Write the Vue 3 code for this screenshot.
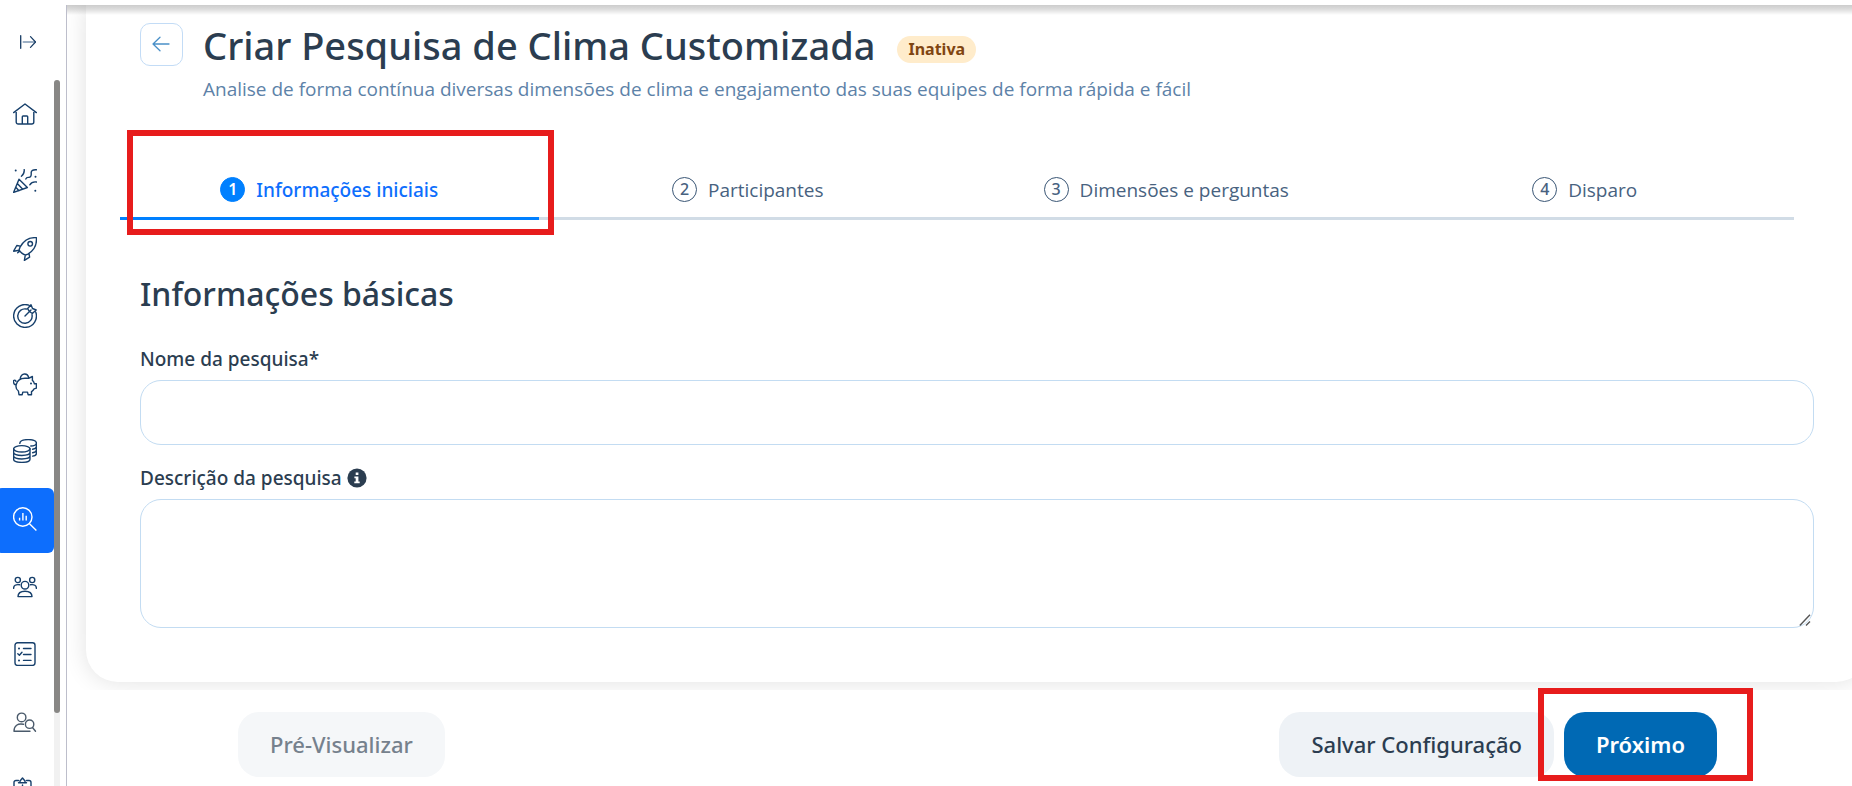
<script setup>
import { ref } from 'vue'

const menu = [
  { label: 'Início', icon: '<path d="M.6 10.6 12 2l11.4 8.6M3.2 8.8V20a2 2 0 0 0 2 2h13.6a2 2 0 0 0 2-2V8.8M9.3 22v-7.2a.8.8 0 0 1 .8-.8h3.8a.8.8 0 0 1 .8.8V22"/>' },
  { label: 'Celebrações', icon: '<path d="M6 10.2.6 23.4l13.8-4.9zM4.3 14.6l5.2 5.5M2.8 18.3l3.2 3.4M11.2.6c.3 2.8-.6 5-2.8 6.6M23.4.8c-3.5-.2-5.400.5-5.200 3.200.3 3-.8 4.600-2.600 4.400-1.500-.2-2.300.4-2.800 1.600M16.800 15.800c1.400-2.200 3.600-3.200 6.600-2.800"/><path d="M2.700 1.500h.01M22.500 7.800h.01M22.300 21.800h.01" stroke-width="2"/>' },
  { label: 'Desenvolvimento', icon: '<path d="M23.400.7c.6 7-2.200 12.700-8.500 16.500l-2.300.8c-2 0-5.900-3.200-6.500-5.300l.9-2.500C10.200 4.300 15.800.2 23.400.7zM7.400 9.100 3.800 8.500.6 14.200l5.500-1M16 16.400l.6 3.800-5.200 3.200.9-5.500M6.300 14.400l-1.600 1.400"/><circle cx="17.200" cy="6.800" r="2.300"/>' },
  { label: 'Metas', icon: '<path d="M15.800 1.200A11.400 11.400 0 1 0 22.800 8.200M13.300 5A7.200 7.200 0 1 0 19 10.600M12 12l6-6M16.500 7.500l-2-2.800L18 .8l1.500 3.700M16.500 7.500l2.800 2 3.900-3.500-3.700-1.500"/>' },
  { label: 'Benefícios', icon: '<path d="M.6 8.600c-.3 3.500 1 4.200 2.600 3.900 1.200-4.600 4.600-6.200 8.800-6.200h3.600l3.800-1.800v3.900c1.400 1 1.700 2.300 2 3.400h2v4.300l-2.300.7c-.7 1.700-1.700 2.300-2.600 2.900v3h-3.400l-.6-2.600H9.800l-.6 2.600H6l-.6-3.700c-2.200-1.500-2.800-3.800-2.200-6.500M.6 8.600c1.300-.9 2.300-.2 2.200.7M7.200 6.500C8.400.5 14.600.8 15.600 5.200"/><path d="M18 11.400h.01" stroke-width="2"/>' },
  { label: 'Remuneração', icon: '<ellipse cx="8.800" cy="9.800" rx="8.200" ry="3.200"/><path d="M.6 9.800v10.400c0 4.200 16.400 4.200 16.400 0V9.800M.6 13.300c0 4.200 16.400 4.200 16.400 0M.6 16.800c0 4.200 16.400 4.200 16.400 0M6.800 4.400c0-5 16.600-5 16.600-.5 0 1.900-2.600 2.900-5.600 3.100M23.400 3.900v10.500c0 1.400-1.600 2.300-3.800 2.700M23.400 7.500c0 1.400-1.600 2.300-3.800 2.700M23.400 11c0 1.400-1.600 2.300-3.800 2.700"/>' },
  { label: 'Pesquisas', active: true, icon: '<circle cx="9.800" cy="10" r="9.200"/><path d="m16.500 16.700 6.900 6.700M6.600 13.600v-2.800M9.900 13.600V6M13.200 13.600V8.800" stroke-linecap="butt"/>' },
  { label: 'Equipes', icon: '<circle cx="4.800" cy="5" r="2.600"/><circle cx="19.200" cy="5" r="2.600"/><circle cx="12" cy="10.200" r="3.800"/><path d="M.6 13.400c0-3 2-4.200 6-3.700M23.400 13.400c0-3-2-4.200-6-3.700M5 21.600c0-3.900 2.900-5.400 7-5.400s7 1.500 7 5.400z"/>' },
  { label: 'Avaliações', icon: '<rect x="2" y=".8" width="20" height="22.600" rx="2.500"/><path d="M10.500 6.500h7.500M10.500 12.500h7.500M10.500 18.400h7.500M4.800 11.800l1.600 1.500L9 10.200"/><path d="M6 6.500h.01M6 18.400h.01" stroke-width="2"/>' },
  { label: 'Recrutamento', icon: '<g stroke="#4a5a6b"><circle cx="8.600" cy="7.400" r="4.300"/><circle cx="16.600" cy="14.200" r="4.200"/><path d="m19.500 17.500 3 3.800M17 21.300H1c0-5.800 3.800-8 9.400-7"/></g>' },
  { label: 'Assistente', icon: '<path d="M5.500 3.500H3a2 2 0 0 0-2 2V22h17V5.500a2 2 0 0 0-2-2h-2.500M5.500 5.800h8M7 5.500V4l2.500-3L12 4v1.500M9.500 8v5"/>' },
]

const steps = ['Informações iniciais', 'Participantes', 'Dimensões e perguntas', 'Disparo']
const current = ref(0)
const nome = ref('')
const descricao = ref('')
</script>

<template>
  <div class="shell">
    <aside class="sidebar">
      <button class="expand" type="button" aria-label="Expandir menu">
        <svg width="16" height="14" viewBox="0 0 16 14" fill="none" stroke="#163a63" stroke-linecap="round" stroke-linejoin="round">
          <path d="M.7.700v12.600" stroke-width="1.300" />
          <path d="M3.300 7h12" stroke="#7d97b3" stroke-width="1.600" />
          <path d="m10.500 1.600 5 5.400-5 5.400" stroke-width="1.200" />
        </svg>
      </button>
      <div class="scroller">
        <nav class="menu">
          <a v-for="item in menu" :key="item.label" href="#" class="item" :class="{ active: item.active }" :aria-label="item.label">
            <svg width="24" height="24" viewBox="0 0 24 24" v-html="item.icon"></svg>
          </a>
        </nav>
        <div class="track"><div class="thumb"></div></div>
      </div>
    </aside>

    <main class="main">
      <div class="content">
        <section class="card">
          <header class="head">
            <button class="back" type="button" aria-label="Voltar">
              <svg width="18" height="16" viewBox="0 0 18 16" fill="none" stroke="#4a90c8" stroke-width="1.300" stroke-linecap="round" stroke-linejoin="round">
                <path d="M17 8H1M8 1.200 1 8l7 6.800" />
              </svg>
            </button>
            <div>
              <div class="title-row">
                <h1>Criar Pesquisa de Clima Customizada</h1>
                <span class="badge">Inativa</span>
              </div>
              <p class="subtitle">Analise de forma contínua diversas dimensões de clima e engajamento das suas equipes de forma rápida e fácil</p>
            </div>
          </header>

          <nav class="steps">
            <button v-for="(step, i) in steps" :key="step" type="button" class="step" :class="{ current: i === current }" @click="current = i">
              <span class="num">{{ i + 1 }}</span>
              <span>{{ step }}</span>
              <span v-if="i === 0" class="mark mark-step"></span>
            </button>
          </nav>

          <form class="form" @submit.prevent>
            <h2>Informações básicas</h2>
            <label for="nome">Nome da pesquisa*</label>
            <input id="nome" v-model="nome" type="text" />
            <label for="descricao">Descrição da pesquisa
              <svg class="info" width="20" height="20" viewBox="0 0 20 20">
                <circle cx="10" cy="10" r="9.600" fill="#2b3d50" />
                <path d="M8.700 4.600h2.700v2.500H8.700zM7.400 8.400h4v5h1.300v1.800H7.300v-1.800h1.400v-3.200H7.400z" fill="#fff" />
              </svg>
            </label>
            <div class="area">
              <textarea id="descricao" v-model="descricao"></textarea>
              <svg class="grip" width="12" height="12" viewBox="0 0 12 12" stroke="#555" stroke-width="1.400">
                <path d="M.8 11.500 11 .8M7 11.500l4-4" />
              </svg>
            </div>
          </form>
        </section>
      </div>

      <footer class="actions">
        <button type="button" class="btn muted" disabled>Pré-Visualizar</button>
        <div class="right">
          <button type="button" class="btn light">Salvar Configuração</button>
          <div class="next">
            <button type="button" class="btn primary">Próximo</button>
            <span class="mark mark-next"></span>
          </div>
        </div>
      </footer>
    </main>
  </div>
</template>

<style>
body { background: #fff; }
</style>

<style scoped>
* { box-sizing: border-box; }
.shell {
  display: flex;
  height: 100vh;
  overflow: hidden;
  font-family: "Noto Sans", "Open Sans", sans-serif;
  color: #2b3d50;
}
button, input, textarea { font: inherit; color: inherit; }
button { cursor: pointer; }
h1, h2, p { margin: 0; }

.sidebar { flex: 0 0 66px; display: flex; flex-direction: column; }
.expand { flex: 0 0 80px; width: 56px; padding: 4px 0 0; border: 0; background: none; display: flex; align-items: center; justify-content: center; }
.scroller { flex: 1; min-height: 0; display: flex; width: 60px; }
.menu { flex: 1; height: 743px; padding-top: 2px; display: flex; flex-direction: column; justify-content: space-between; }
.item { flex: 0 0 65px; display: flex; align-items: center; margin-left: -4px; padding: 0 0 2px 17px; border-radius: 6px; }
.item svg { fill: none; stroke: #163f6b; stroke-width: 1.4; stroke-linecap: round; stroke-linejoin: round; }
.item.active { background: #0d6efd; }
.item.active svg { stroke: #fff; }
.track { flex: 0 0 6px; background: #f1f1f1; border-radius: 3px 3px 0 0; }
.thumb { height: calc(90% - 2px); background: #888785; border-radius: 3px; }

.main {
  position: relative;
  flex: 1;
  min-width: 0;
  margin-top: 5px;
  border-left: 1px solid #bdbecb;
  display: flex;
  flex-direction: column;
}
.main::before {
  content: "";
  position: absolute;
  inset: 0 0 auto;
  height: 10px;
  background: linear-gradient(rgba(0, 0, 0, .2), rgba(0, 0, 0, .14) 40%, rgba(0, 0, 0, 0));
  z-index: 1;
}
.content { overflow: hidden; padding: 0 0 8px 19px; }
.card {
  margin-right: -16px;
  padding: 18px 54px 54px;
  background: #fff;
  border-radius: 0 0 32px 32px;
  box-shadow: 0 0 24px rgba(0, 0, 0, .12);
}

.head { display: flex; gap: 20px; }
.back {
  flex: 0 0 43px;
  height: 43px;
  padding: 0 2px 2px 0;
  border: 1px solid #c3dcf6;
  border-radius: 10px;
  background: #fff;
  display: flex;
  align-items: center;
  justify-content: center;
}
.title-row { display: flex; align-items: center; gap: 22px; height: 44px; }
h1 { font-size: 38px; line-height: 44px; font-weight: 500; }
.badge { margin-top: 8px; padding: 0 11px; border-radius: 14px; background: #ffeccb; color: #7f4511; font-size: 16px; line-height: 27px; font-weight: 700; }
.subtitle { margin-top: 8px; font-family: "Open Sans", "Noto Sans", sans-serif; font-size: 19px; line-height: 28px; color: #5d82a8; }

.steps { display: flex; margin: 51px 0 0 -20px; width: 100%; }
.step {
  position: relative;
  flex: 1 1 0;
  height: 66px;
  padding: 0 0 12px;
  border: 0;
  border-bottom: 3px solid #d1dce6;
  background: none;
  display: flex;
  align-items: flex-end;
  justify-content: center;
  gap: 11px;
  font-family: "Open Sans", "Noto Sans", sans-serif;
  font-size: 19px;
  line-height: 30px;
  color: #48627f;
}
.num { width: 25px; height: 25px; margin-bottom: 3px; border: 1px solid #3a5675; border-radius: 50%; font-family: "Noto Sans", "Open Sans", sans-serif; font-size: 16px; line-height: 22px; font-weight: 500; text-align: center; }
.step.current { color: #0d6efd; font-family: "Noto Sans", "Open Sans", sans-serif; font-weight: 500; border-color: #0080ff; }
.step.current .num { background: #0080ff; border-color: #0080ff; color: #fff; font-weight: 600; }

.mark { position: absolute; border: 6px solid #e71c1c; pointer-events: none; z-index: 2; }
.mark-step { inset: -24px -15px -18px 7px; }
.mark-next { inset: -24px -36px -4px -26px; }

.form { display: flex; flex-direction: column; }
h2 { margin: 52px 0 0; font-size: 32px; line-height: 44px; font-weight: 500; }
label { margin-top: 30px; height: 26px; margin-bottom: 8px; font-size: 19px; line-height: 26px; font-weight: 500; }
input + label { margin-top: 20px; }
.info { vertical-align: -3px; }
input, textarea { display: block; width: 100%; border: 1px solid #c3dcf2; border-radius: 21px; background: #fff; padding: 16px 20px; outline: none; }
input { height: 65px; }
textarea { height: 129px; resize: none; }
.area { position: relative; }
.grip { position: absolute; right: 3px; bottom: 2px; }

.actions { display: flex; justify-content: space-between; padding: 22px 135px 0 171px; }
.right { display: flex; gap: 10px; }
.next { position: relative; }
.btn { height: 65px; padding: 0 32px 2px; border: 0; border-radius: 21px; font-size: 22px; line-height: 30px; font-weight: 500; white-space: nowrap; }
.muted { background: #f5f7f9; color: #76818d; }
.light { background: #eef2f6; }
.primary { background: #0069b4; color: #fff; font-weight: 600; }
</style>
